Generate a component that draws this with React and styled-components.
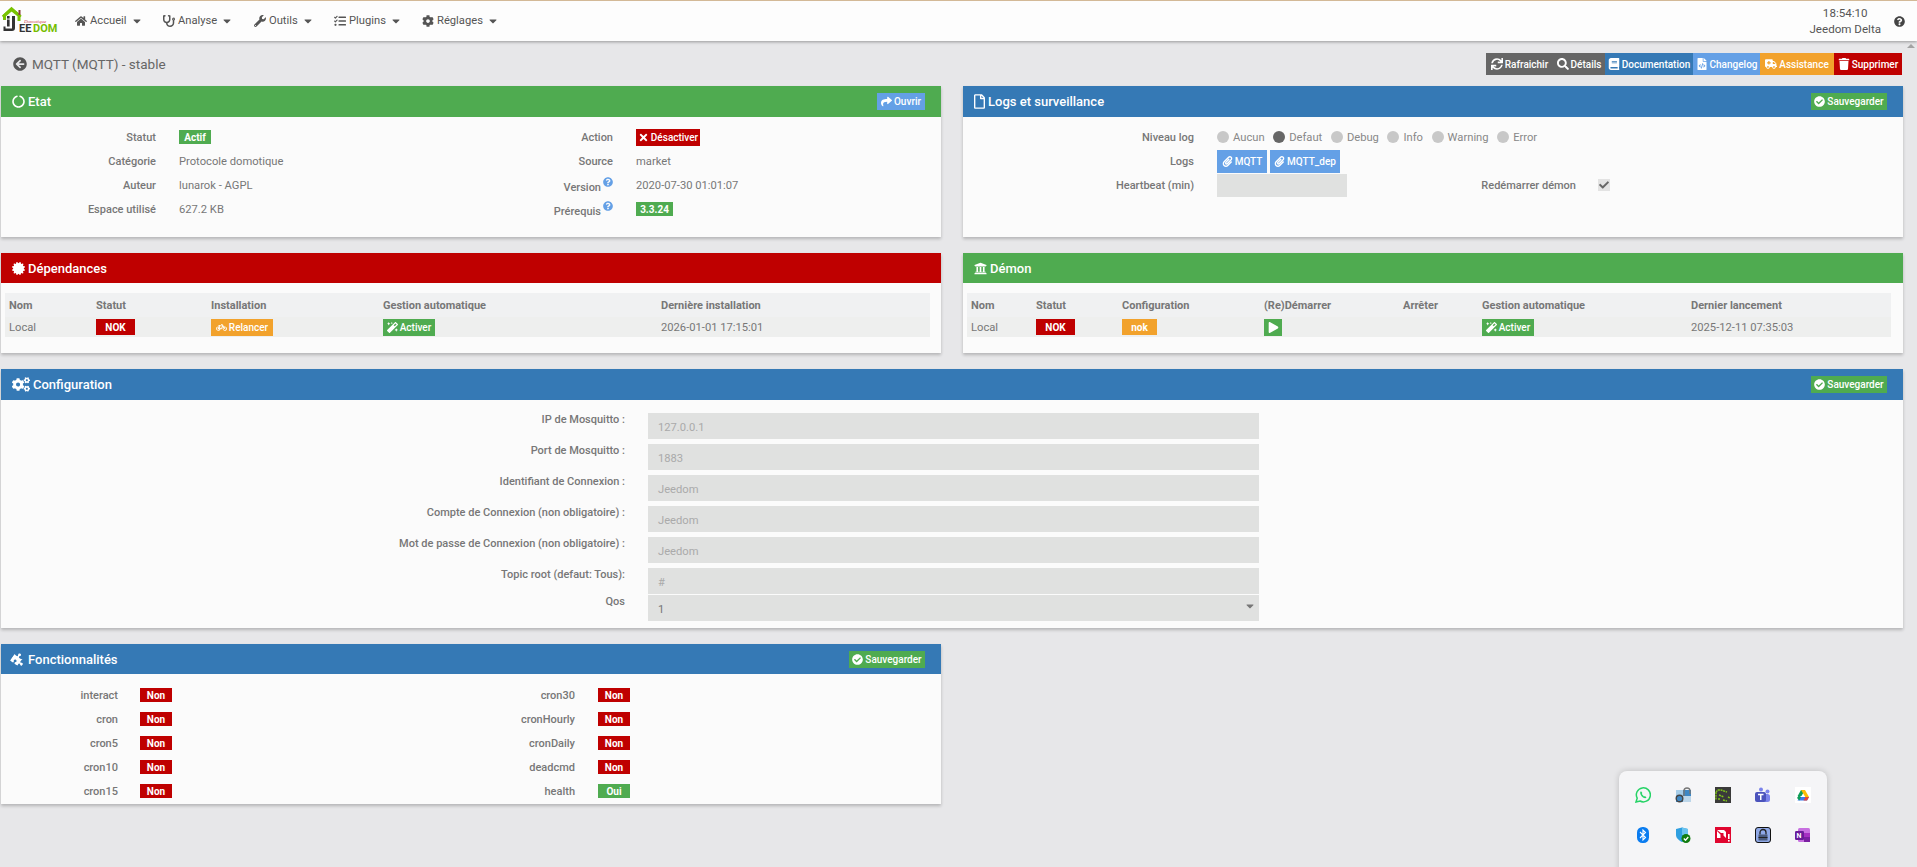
import React from 'react'
import styled, { createGlobalStyle } from 'styled-components'
import {
  FaHome, FaStethoscope, FaWrench, FaTasks, FaCog, FaCogs, FaArrowCircleLeft, FaCircleNotch,
  FaRegFile, FaUniversity, FaCertificate, FaPuzzlePiece, FaSync, FaSearch, FaBook, FaFileCode,
  FaAmbulance, FaTrash, FaTimes, FaBicycle, FaMagic, FaPlay, FaPaperclip, FaCheckCircle,
  FaQuestionCircle, FaCaretDown, FaShare, FaCheck,
} from 'react-icons/fa'

const GREEN = '#4fab50'
const BLUE = '#3579b5'
const RED = '#bf0000'
const ORANGE = '#f2a22c'
const SKY = '#64a0e6'
const GREY = '#e0e1e0'

const Global = createGlobalStyle`
html, body { margin: 0; padding: 0; height: 100%; overflow: hidden; }
body { background: #e7e7e9; font-family: Roboto, "Liberation Sans", sans-serif; font-size: 11.2px; color: #777; }
* { box-sizing: border-box; }
`

const Page = styled.div`
position: relative;
height: 867px;
display: flex;
flex-direction: column;
overflow: hidden;
`

const Nav = styled.header`
height: 41px;
flex: none;
border-top: 1px solid #d3b997;
background: #fdfdfd;
box-shadow: 0 1px 3px rgba(0,0,0,.35);
display: flex;
align-items: center;
position: relative;
z-index: 2;
`

const Logo = styled.svg`
width: 58px;
height: 40px;
flex: none;
`

const Menu = styled.nav`
display: flex;
margin-left: 17px;
margin-top: -1px;
`

const MenuItem = styled.span`
display: flex;
align-items: center;
gap: 3px;
color: #555;
font-size: 11.2px;
width: ${(p) => p.$w}px;
svg { flex: none; font-size: 12px; }
svg:last-child { font-size: 12px; margin-left: 1px; }
`

const Clock = styled.div`
margin-left: auto;
margin-right: 36px;
text-align: center;
line-height: 16px;
color: #555;
font-size: 11.6px;
`

const Help = styled(FaQuestionCircle)`
position: absolute;
right: 12px;
top: 15px;
font-size: 11px;
color: #444;
`

const Body = styled.div`
flex: 1;
display: flex;
min-height: 0;
`

const Main = styled.main`
width: 1905px;
padding: 12px 2px 0 1px;
`

const Scroll = styled.div`
flex: 1;
display: flex;
justify-content: center;
padding-top: 3px;
&::before {
  content: '';
  width: 0;
  height: 0;
  border-left: 4px solid transparent;
  border-right: 4px solid transparent;
  border-bottom: 4px solid #a3a3a3;
}
`

const TitleRow = styled.div`
height: 22px;
display: flex;
align-items: center;
justify-content: space-between;
margin-bottom: 11px;
padding-left: 12px;
`

const PageTitle = styled.h1`
margin: 0;
display: flex;
align-items: center;
gap: 5px;
font-size: 13.5px;
font-weight: 400;
color: #666;
svg { font-size: 14px; color: #555; }
`

const Actions = styled.div`
display: flex;
margin-right: 1px;
`

const ActionButton = styled.span`
height: 22px;
display: flex;
align-items: center;
justify-content: center;
gap: 2px;
width: ${(p) => p.$w}px;
background: ${(p) => p.$bg};
color: #fff;
font-size: 10px;
font-weight: 500;
white-space: nowrap;
svg { font-size: 12px; flex: none; }
`

const Columns = styled.div`
display: grid;
grid-template-columns: 940px 940px;
column-gap: 22px;
`

const Panel = styled.section`
background: #fbfbfb;
box-shadow: 0 2px 3px rgba(0,0,0,.22);
margin-bottom: 16px;
height: ${(p) => p.$h}px;
width: ${(p) => p.$w || 'auto'};
`

const PanelHead = styled.div`
height: ${(p) => p.$h || 31}px;
background: ${(p) => p.$bg};
color: #fff;
display: flex;
align-items: center;
justify-content: space-between;
padding: 0 16px 0 11px;
`

const PanelTitle = styled.h3`
margin: 0;
display: flex;
align-items: center;
gap: 3px;
font-size: 13px;
font-weight: 500;
svg { width: ${(p) => p.$icon || 13}px; height: 15px; flex: none; }
`

const TiltedPiece = styled(FaPuzzlePiece)`
transform: rotate(35deg);
`

const HeadButton = styled.span`
height: 17px;
width: ${(p) => p.$w}px;
background: ${(p) => p.$bg};
color: #fff;
display: flex;
align-items: center;
justify-content: center;
gap: 2px;
font-size: 10px;
font-weight: 500;
svg { font-size: 11px; }
`

const TwoCols = styled.div`
display: grid;
grid-template-columns: ${(p) => p.$first}px 1fr;
padding-top: ${(p) => p.$top}px;
`

const Field = styled.div`
display: grid;
grid-template-columns: ${(p) => p.$label}px 1fr;
column-gap: ${(p) => p.$gap || 23}px;
align-items: center;
height: 24px;
color: #777;
font-size: 11.2px;
`

const Label = styled.label`
text-align: right;
font-weight: 500;
font-size: 11px;
color: #777;
white-space: nowrap;
padding-top: 1px;
`

const Hint = styled(FaQuestionCircle)`
color: #64a0e6;
font-size: 10px;
margin-left: 2px;
vertical-align: 4px;
`

const Badge = styled.span`
display: inline-flex;
align-items: center;
justify-content: center;
gap: 2px;
height: ${(p) => p.$h || 14}px;
width: ${(p) => p.$w}px;
background: ${(p) => p.$bg};
color: #fff;
font-size: 10px;
font-weight: ${(p) => (p.$thin ? 500 : 700)};
white-space: nowrap;
svg { font-size: 11px; flex: none; }
`

const RadioRow = styled.div`
display: flex;
align-items: center;
`

const Radio = styled.span`
display: flex;
align-items: center;
gap: 4px;
margin-right: 8.6px;
font-size: 11.2px;
color: #888;
&::before {
  content: '';
  width: 12px;
  height: 12px;
  border-radius: 50%;
  background: ${(p) => (p.$on ? '#666' : '#c8c8c8')};
}
`

const LogButtons = styled.div`
display: flex;
gap: 3px;
`

const LogButton = styled.span`
height: 23px;
width: ${(p) => p.$w}px;
background: ${SKY};
color: #fff;
display: flex;
align-items: center;
justify-content: center;
gap: 2px;
font-size: 10px;
font-weight: 500;
svg { font-size: 11px; }
`

const GreyBox = styled.div`
width: 130px;
height: 23px;
background: ${GREY};
`

const CheckBox = styled.span`
width: 12px;
height: 12px;
background: #e3e3e3;
color: #666;
display: flex;
align-items: center;
justify-content: center;
svg { font-size: 10px; }
`

const Table = styled.div`
margin: 10px ${(p) => p.$right}px 0 ${(p) => p.$left}px;
`

const TableHead = styled.div`
display: grid;
grid-template-columns: ${(p) => p.$cols};
height: 24px;
align-items: center;
background: #f0f1f2;
font-weight: 700;
font-size: 11px;
color: #777;
`

const TableRow = styled.div`
display: grid;
grid-template-columns: ${(p) => p.$cols};
height: 20px;
align-items: center;
background: #eeefee;
font-size: 11.2px;
color: #777;
`

const Cell = styled.div`
padding-left: ${(p) => p.$pad ?? 0}px;
display: flex;
align-items: center;
white-space: nowrap;
`

const ConfigForm = styled.div`
padding-top: 13px;
display: flex;
flex-direction: column;
`

const ConfigRow = styled.div`
display: grid;
grid-template-columns: 624px 611px;
column-gap: 23px;
height: 26px;
margin-bottom: ${(p) => p.$mb ?? 5}px;
`

const ConfigLabel = styled.label`
text-align: right;
font-weight: 500;
font-size: 11px;
color: #777;
line-height: 14px;
`

const Input = styled.div`
position: relative;
background: ${GREY};
color: ${(p) => (p.$dark ? '#777' : '#aaa')};
font-size: 11.2px;
padding-left: 10px;
display: flex;
align-items: center;
padding-top: 2px;
`

const SelectCaret = styled(FaCaretDown)`
position: absolute;
right: 3px;
top: 5px;
font-size: 12px;
color: #777;
`

const Tray = styled.aside`
position: absolute;
left: 1619px;
top: 771px;
width: 208px;
height: 120px;
background: #f5f5f7;
border-radius: 8px;
box-shadow: 0 0 6px rgba(0,0,0,.18);
padding: 16px;
display: grid;
grid-template-columns: repeat(5, 16px);
grid-auto-rows: 16px;
column-gap: 24px;
row-gap: 24px;
z-index: 3;
`

const TrayIcon = styled.svg`
width: 16px;
height: 16px;
display: block;
`

const JeedomLogo = () => (
  <Logo viewBox="0 0 58 40">
    <path d="M4.5 19 V14.5 L11.5 8.5 L19 14.5 V20" fill="none" stroke="#79c300" strokeWidth="3" />
    <path d="M2.5 15.5 L11.5 7 L21 15.5" fill="none" stroke="#79c300" strokeWidth="2" />
    <rect x="18.5" y="9" width="2" height="5" fill="#8a3d3d" />
    <rect x="7" y="15" width="2.6" height="2.6" fill="#333" />
    <rect x="7" y="18.5" width="2.6" height="7" fill="#333" />
    <path d="M12 15 H15 V27 Q15 30 12 30 H3.5 V25.5 H5.5 V27.5 H12 Z" fill="#333" />
    <text x="24" y="21.5" fontSize="5" fontStyle="italic" fill="#cc3b4a" fontFamily="Liberation Serif, serif">Domotique</text>
    <text x="19" y="30.5" fontSize="11" fontWeight="700" fill="#333" fontFamily="Roboto, sans-serif">EE</text>
    <text x="33" y="30.5" fontSize="11" fontWeight="700" fill="#76bd00" fontFamily="Roboto, sans-serif">DOM</text>
  </Logo>
)

const TrayIcons = () => (
  <>
    <TrayIcon viewBox="0 0 16 16">
      <path d="M1 15 L2.2 11.2 A7 7 0 1 1 5 14 Z" fill="none" stroke="#25d366" strokeWidth="1.5" />
      <path d="M5.5 4.5 C4.5 6 6 9 8 10.5 C9.5 11.5 11 11.5 11.5 10.5 L10 9 L9 9.5 L6.8 7 L7.3 6 L6.3 4.5 Z" fill="#25d366" />
    </TrayIcon>
    <TrayIcon viewBox="0 0 16 16">
      <rect x="1" y="3" width="15" height="12" fill="#3e87c4" />
      <rect x="1" y="3" width="7" height="6" fill="#a6cde9" />
      <rect x="8" y="9" width="8" height="6" fill="#bcd6ea" />
      <circle cx="4.5" cy="11.5" r="3.3" fill="none" stroke="#444" strokeWidth="1.4" />
      <path d="M9 9 V4 A3 3 0 0 1 15 4 V7" fill="none" stroke="#777" strokeWidth="1.4" />
    </TrayIcon>
    <TrayIcon viewBox="0 0 16 16">
      <rect width="16" height="16" fill="#3a3a3a" />
      <path d="M1 5 V13 M1 5 L3 3 H6 L12 5 M4 8 L9 10 M3 12 H5 M8 13 L12 14 M13 10 L15 11" stroke="#7fc31c" strokeWidth="1.4" strokeDasharray="2 .7" fill="none" />
    </TrayIcon>
    <TrayIcon viewBox="0 0 16 16">
      <circle cx="6" cy="2.5" r="2" fill="#7b83eb" />
      <circle cx="12.5" cy="4.5" r="2" fill="#7b83eb" />
      <rect x="8" y="7" width="7" height="8" rx="2.5" fill="#7b83eb" />
      <rect x="0" y="5" width="11" height="10" rx="2" fill="#4b53bc" />
      <path d="M3 7.5 H8.5 M5.75 7.5 V13" stroke="#fff" strokeWidth="1.5" />
    </TrayIcon>
    <TrayIcon viewBox="0 0 16 16">
      <rect width="16" height="16" fill="#fff" />
      <path d="M6 3 H10 L6.5 9 H2.6 Z" fill="#0f9d58" />
      <path d="M6 3 H10 L14 10 H10.3 Z" fill="#fbbc04" />
      <path d="M2.5 13.5 L4.5 10 H14 L12 13.5 Z" fill="#3b7bee" />
      <path d="M2 11 L4 8 L6 10 L4.5 13.5 Z" fill="#0f9d58" />
      <path d="M10.5 10 H14 L12 13.5 H8.5 Z" fill="#ea4335" />
    </TrayIcon>
    <TrayIcon viewBox="0 0 16 16">
      <rect x="2" y="0" width="12" height="16" rx="5.5" fill="#0a7cf0" />
      <path d="M5 5 L10.5 10.5 L8 13 V3 L10.5 5.5 L5 11" fill="none" stroke="#fff" strokeWidth="1.1" />
    </TrayIcon>
    <TrayIcon viewBox="0 0 16 16">
      <path d="M1 2 L7 0.5 L13 2 V8 C13 11 10 13.5 7 15 C4 13.5 1 11 1 8 Z" fill="#2f9fe0" />
      <path d="M7 0.5 L13 2 V8 H7 Z" fill="#69c3ef" />
      <circle cx="11" cy="11.5" r="4.5" fill="#107c10" />
      <path d="M8.8 11.5 L10.5 13.2 L13.3 10" fill="none" stroke="#fff" strokeWidth="1.3" />
    </TrayIcon>
    <TrayIcon viewBox="0 0 16 16">
      <rect width="16" height="16" fill="#e0062f" />
      <path d="M2 3 H9 L11 5 V11 L8.5 8.5 V6 H6 Z M2 4 L5.5 7.5 V11 H2 Z" fill="#fff" />
      <rect x="13" y="7" width="1.6" height="5" fill="#fff" />
      <rect x="13" y="13" width="1.6" height="1.6" fill="#fff" />
    </TrayIcon>
    <TrayIcon viewBox="0 0 16 16">
      <rect x=".5" y=".5" width="15" height="15" rx="2.5" fill="#8fa8e6" stroke="#111" />
      <path d="M5 7.5 V5.5 A3 3 0 0 1 11 5.5 V7.5" fill="none" stroke="#222" strokeWidth="1.3" />
      <rect x="3.5" y="7.5" width="9" height="6" fill="#4a5a7d" />
      <rect x="3.5" y="10" width="9" height="1" fill="#222" />
    </TrayIcon>
    <TrayIcon viewBox="0 0 16 16">
      <rect x="3" y="1" width="12" height="14" rx="1.5" fill="#c76fe0" />
      <rect x="9" y="6" width="6" height="4" fill="#a62fc2" />
      <rect x="9" y="10" width="6" height="5" fill="#7b1fa2" />
      <rect x="0" y="4" width="9" height="9" rx="1.2" fill="#6a1b9a" />
      <text x="1.6" y="11" fontSize="7" fontWeight="700" fill="#fff" fontFamily="Roboto, sans-serif">N</text>
    </TrayIcon>
  </>
)

const SaveButton = () => (
  <HeadButton $bg={GREEN} $w={76}><FaCheckCircle />Sauvegarder</HeadButton>
)

const DEP_COLS = '91px 115px 172px 278px 1fr'
const DEMON_COLS = '69px 86px 142px 139px 79px 209px 1fr'

const CONFIG = [
  ['IP de Mosquitto :', '127.0.0.1'],
  ['Port de Mosquitto :', '1883'],
  ['Identifiant de Connexion :', 'Jeedom'],
  ['Compte de Connexion (non obligatoire) :', 'Jeedom'],
  ['Mot de passe de Connexion (non obligatoire) :', 'Jeedom'],
  ['Topic root (defaut: Tous):', '#'],
]

const FEATURES = [
  ['interact', 'cron30'],
  ['cron', 'cronHourly'],
  ['cron5', 'cronDaily'],
  ['cron10', 'deadcmd'],
  ['cron15', 'health'],
]

const Flag = ({ on }) => (
  <Badge $bg={on ? GREEN : RED} $w={32}>{on ? 'Oui' : 'Non'}</Badge>
)

const App = () => (
  <Page>
    <Global />
    <Nav>
      <JeedomLogo />
      <Menu>
        <MenuItem $w={88}><FaHome />Accueil<FaCaretDown /></MenuItem>
        <MenuItem $w={91}><FaStethoscope />Analyse<FaCaretDown /></MenuItem>
        <MenuItem $w={80}><FaWrench />Outils<FaCaretDown /></MenuItem>
        <MenuItem $w={88}><FaTasks />Plugins<FaCaretDown /></MenuItem>
        <MenuItem $w={90}><FaCog />Réglages<FaCaretDown /></MenuItem>
      </Menu>
      <Clock>
        <div>18:54:10</div>
        <div>Jeedom Delta</div>
      </Clock>
      <Help />
    </Nav>
    <Body>
      <Main>
        <TitleRow>
          <PageTitle><FaArrowCircleLeft />MQTT (MQTT) - stable</PageTitle>
          <Actions>
            <ActionButton $bg="#666" $w={67}><FaSync />Rafraichir</ActionButton>
            <ActionButton $bg="#666" $w={52}><FaSearch />Détails</ActionButton>
            <ActionButton $bg={BLUE} $w={88}><FaBook />Documentation</ActionButton>
            <ActionButton $bg={SKY} $w={67}><FaFileCode />Changelog</ActionButton>
            <ActionButton $bg={ORANGE} $w={74}><FaAmbulance />Assistance</ActionButton>
            <ActionButton $bg={RED} $w={68}><FaTrash />Supprimer</ActionButton>
          </Actions>
        </TitleRow>

        <Columns>
          <Panel $h={151}>
            <PanelHead $bg={GREEN}>
              <PanelTitle><FaCircleNotch />Etat</PanelTitle>
              <HeadButton $bg={SKY} $w={48}><FaShare />Ouvrir</HeadButton>
            </PanelHead>
            <TwoCols $first={457} $top={8}>
              <div>
                <Field $label={155}><Label>Statut</Label><div><Badge $bg={GREEN} $w={32}>Actif</Badge></div></Field>
                <Field $label={155}><Label>Catégorie</Label><span>Protocole domotique</span></Field>
                <Field $label={155}><Label>Auteur</Label><span>lunarok - AGPL</span></Field>
                <Field $label={155}><Label>Espace utilisé</Label><span>627.2 KB</span></Field>
              </div>
              <div>
                <Field $label={155}><Label>Action</Label><div><Badge $bg={RED} $w={64} $h={17} $thin><FaTimes />Désactiver</Badge></div></Field>
                <Field $label={155}><Label>Source</Label><span>market</span></Field>
                <Field $label={155}><Label>Version<Hint /></Label><span>2020-07-30 01:01:07</span></Field>
                <Field $label={155}><Label>Prérequis<Hint /></Label><div><Badge $bg={GREEN} $w={37}>3.3.24</Badge></div></Field>
              </div>
            </TwoCols>
          </Panel>

          <Panel $h={151}>
            <PanelHead $bg={BLUE}>
              <PanelTitle $icon={11}><FaRegFile />Logs et surveillance</PanelTitle>
              <SaveButton />
            </PanelHead>
            <TwoCols $first={470} $top={8}>
              <div>
                <Field $label={231}>
                  <Label>Niveau log</Label>
                  <RadioRow>
                    <Radio>Aucun</Radio>
                    <Radio $on>Defaut</Radio>
                    <Radio>Debug</Radio>
                    <Radio>Info</Radio>
                    <Radio>Warning</Radio>
                    <Radio>Error</Radio>
                  </RadioRow>
                </Field>
                <Field $label={231}>
                  <Label>Logs</Label>
                  <LogButtons>
                    <LogButton $w={50}><FaPaperclip />MQTT</LogButton>
                    <LogButton $w={70}><FaPaperclip />MQTT_dep</LogButton>
                  </LogButtons>
                </Field>
                <Field $label={231}><Label>Heartbeat (min)</Label><GreyBox /></Field>
              </div>
              <div>
                <Field />
                <Field />
                <Field $label={143} $gap={22}>
                  <Label>Redémarrer démon</Label>
                  <CheckBox><FaCheck /></CheckBox>
                </Field>
              </div>
            </TwoCols>
          </Panel>

          <Panel $h={100}>
            <PanelHead $bg={RED} $h={30}>
              <PanelTitle><FaCertificate />Dépendances</PanelTitle>
            </PanelHead>
            <Table $left={4} $right={11}>
              <TableHead $cols={DEP_COLS}>
                <Cell $pad={4}>Nom</Cell><Cell>Statut</Cell><Cell>Installation</Cell><Cell>Gestion automatique</Cell><Cell>Dernière installation</Cell>
              </TableHead>
              <TableRow $cols={DEP_COLS}>
                <Cell $pad={4}>Local</Cell>
                <Cell><Badge $bg={RED} $w={39} $h={16}>NOK</Badge></Cell>
                <Cell><Badge $bg={ORANGE} $w={62} $h={17} $thin><FaBicycle />Relancer</Badge></Cell>
                <Cell><Badge $bg={GREEN} $w={52} $h={17} $thin><FaMagic />Activer</Badge></Cell>
                <Cell>2026-01-01 17:15:01</Cell>
              </TableRow>
            </Table>
          </Panel>

          <Panel $h={100}>
            <PanelHead $bg={GREEN} $h={30}>
              <PanelTitle><FaUniversity />Démon</PanelTitle>
            </PanelHead>
            <Table $left={4} $right={12}>
              <TableHead $cols={DEMON_COLS}>
                <Cell $pad={4}>Nom</Cell><Cell>Statut</Cell><Cell>Configuration</Cell><Cell>(Re)Démarrer</Cell><Cell>Arrêter</Cell><Cell>Gestion automatique</Cell><Cell>Dernier lancement</Cell>
              </TableHead>
              <TableRow $cols={DEMON_COLS}>
                <Cell $pad={4}>Local</Cell>
                <Cell><Badge $bg={RED} $w={39} $h={16}>NOK</Badge></Cell>
                <Cell><Badge $bg={ORANGE} $w={35} $h={16}>nok</Badge></Cell>
                <Cell><Badge $bg={GREEN} $w={18} $h={17}><FaPlay /></Badge></Cell>
                <Cell />
                <Cell><Badge $bg={GREEN} $w={52} $h={17} $thin><FaMagic />Activer</Badge></Cell>
                <Cell>2025-12-11 07:35:03</Cell>
              </TableRow>
            </Table>
          </Panel>
        </Columns>

        <Panel $h={259}>
          <PanelHead $bg={BLUE}>
            <PanelTitle $icon={18}><FaCogs />Configuration</PanelTitle>
            <SaveButton />
          </PanelHead>
          <ConfigForm>
            {CONFIG.map(([label, value], i) => (
              <ConfigRow key={label} $mb={i === 5 ? 1 : 5}>
                <ConfigLabel>{label}</ConfigLabel>
                <Input>{value}</Input>
              </ConfigRow>
            ))}
            <ConfigRow>
              <ConfigLabel>Qos</ConfigLabel>
              <Input $dark>1<SelectCaret /></Input>
            </ConfigRow>
          </ConfigForm>
        </Panel>

        <Panel $h={160} $w="940px">
          <PanelHead $bg={BLUE} $h={30}>
            <PanelTitle><TiltedPiece />Fonctionnalités</PanelTitle>
            <SaveButton />
          </PanelHead>
          <TwoCols $first={457} $top={9}>
            <div>
              {FEATURES.map(([name]) => (
                <Field key={name} $label={117} $gap={22}><Label>{name}</Label><div><Flag /></div></Field>
              ))}
            </div>
            <div>
              {FEATURES.map(([, name]) => (
                <Field key={name} $label={117} $gap={23}><Label>{name}</Label><div><Flag on={name === 'health'} /></div></Field>
              ))}
            </div>
          </TwoCols>
        </Panel>
      </Main>
      <Scroll />
    </Body>
    <Tray><TrayIcons /></Tray>
  </Page>
)

export default App
